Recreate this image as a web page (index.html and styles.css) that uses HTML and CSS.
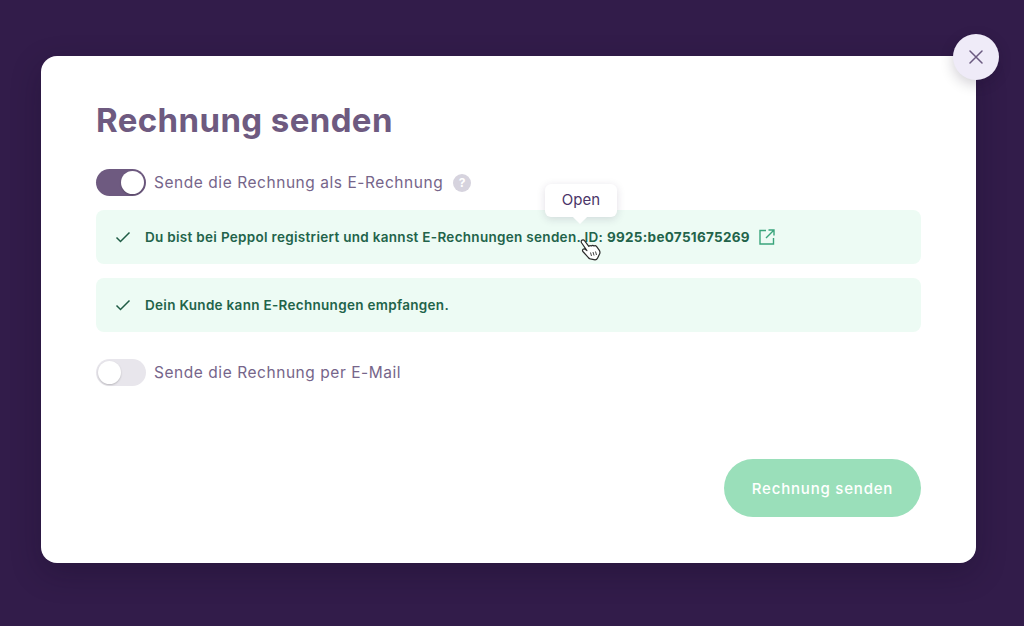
FILE: index.html
```html
<!DOCTYPE html>
<html lang="de">
<head>
    <meta charset="UTF-8">
    <meta name="viewport" content="width=device-width, initial-scale=1.0">
    <title>Rechnung senden</title>
    <link rel="stylesheet" href="styles.css">
</head>
<body>
    <div class="modal">
        <button class="close-btn" aria-label="Schliessen">
            <svg width="14" height="14" viewBox="0 0 14 14"><path d="M1 1l12 12M13 1L1 13" stroke="#6b5a80" stroke-width="1.5" fill="none" stroke-linecap="round"/></svg>
        </button>

        <h1 class="title">Rechnung senden</h1>

        <div class="toggle-row">
            <span class="toggle toggle-on"><span class="knob"></span></span>
            <span class="toggle-label">Sende die Rechnung als E-Rechnung</span>
            <span class="help">?</span>
        </div>

        <div class="notice notice-first">
            <svg class="check" width="16" height="12" viewBox="0 0 16 12"><path d="M1.5 6.5l4 4L14.5 1.5" stroke="#1f5c45" stroke-width="1.5" fill="none"/></svg>
            <span class="notice-text">Du bist bei Peppol registriert und kannst E-Rechnungen senden. ID: <b>9925:be0751675269</b></span>
            <svg class="ext" width="16" height="16" viewBox="0 0 16 16"><path d="M7 1.5H1v13.5h13.5V9M9.5 1H15v5.5M15 1L7 9" stroke="#3aa57c" stroke-width="1.4" fill="none"/></svg>
            <div class="tooltip">Open</div>
            <svg class="cursor" width="22" height="24" viewBox="0 0 22 24">
                <path d="M1.5 2.5c.9-1 2.3-.8 3 .2l4.3 5.600c.7-.8 1.800-.9 2.600-.3.700-.7 1.900-.7 2.600 0 .8-.5 1.900-.3 2.500.4l2.700 3.700c1 1.500.9 3.300 0 4.700l-1.700 3.500c-.5 1-1.400 1.500-2.400 1.500l-4.800-.9c-.9-.2-1.600-.7-2.100-1.500l-5.300-5.900c-.6-.7-.5-1.700.2-2.200.7-.5 1.700-.4 2.400.2l1.400 1.100L1.700 5c-.5-.9-.7-1.800-.2-2.500z" fill="#fff" stroke="#2b2b2b" stroke-width="1.2" stroke-linejoin="round"/>
                <path d="M10.5 14.5l1 3.5M13 14l1 3.5M15.5 13.5l1 3.5" stroke="#444" stroke-width="1"/>
            </svg>
        </div>

        <div class="notice">
            <svg class="check" width="16" height="12" viewBox="0 0 16 12"><path d="M1.5 6.5l4 4L14.5 1.5" stroke="#1f5c45" stroke-width="1.5" fill="none"/></svg>
            <span class="notice-text">Dein Kunde kann E-Rechnungen empfangen.</span>
        </div>

        <div class="toggle-row toggle-row-last">
            <span class="toggle"><span class="knob"></span></span>
            <span class="toggle-label">Sende die Rechnung per E-Mail</span>
        </div>

        <div class="actions">
            <button class="send-btn">Rechnung senden</button>
        </div>
    </div>
</body>
</html>
```

FILE: styles.css
```css
* {
    box-sizing: border-box;
}
html, body {
    height: 100%;
}
body {
    margin: 0;
    padding: 56px 48px 63px 41px;
    background-color: #321c4a;
    font-family: Inter, "Open Sans", sans-serif;
    overflow: hidden;
}
.modal {
    position: relative;
    height: 507px;
    background-color: #fff;
    border-radius: 16px;
    padding: 44px 55px 0 55px;
    box-shadow: 0 10px 30px rgba(20,10,35,0.3);
}
.close-btn {
    position: absolute;
    top: -22px;
    right: -23px;
    width: 46px;
    height: 46px;
    padding: 0;
    border: none;
    border-radius: 50%;
    background-color: #efebf8;
    display: flex;
    align-items: center;
    justify-content: center;
    box-shadow: 0 4px 14px rgba(20,10,35,0.2);
}
.title {
    margin: 0 0 29px 0;
    font-size: 33px;
    line-height: 40px;
    font-weight: 700;
    letter-spacing: 0.4px;
    color: #6e5a80;
}
.toggle-row {
    display: flex;
    align-items: center;
    height: 27px;
    margin-bottom: 14px;
}
.toggle-row-last {
    margin-top: 27px;
}
.toggle {
    width: 50px;
    height: 27px;
    border-radius: 14px;
    background-color: #e8e6ec;
    padding: 2px;
    display: flex;
    flex-shrink: 0;
}
.toggle-on {
    background-color: #6e5a80;
    justify-content: flex-end;
}
.knob {
    width: 23px;
    height: 23px;
    border-radius: 50%;
    background-color: #fff;
    box-shadow: 0 1px 2px rgba(0,0,0,0.2);
}
.toggle-label {
    margin-left: 8px;
    font-size: 15.5px;
    letter-spacing: 0.55px;
    color: #76658a;
}
.help {
    width: 18px;
    height: 18px;
    margin-left: 10px;
    border-radius: 50%;
    background-color: #d6d3de;
    color: #fff;
    font-size: 12px;
    font-weight: 700;
    text-align: center;
    line-height: 18px;
}
.notice {
    position: relative;
    display: flex;
    align-items: center;
    height: 54px;
    padding-left: 19px;
    background-color: #edfbf4;
    border-radius: 8px;
}
.notice-first {
    margin-bottom: 14px;
}
.check {
    flex-shrink: 0;
    margin-right: 14px;
}
.notice-text {
    font-size: 13.5px;
    font-weight: 600;
    letter-spacing: 0.3px;
    color: #22634a;
}
.notice-text b {
    font-weight: 700;
}
.ext {
    margin-left: 9px;
}
.tooltip {
    position: absolute;
    top: -26px;
    left: 449px;
    width: 72px;
    height: 33px;
    background-color: #fff;
    border-radius: 6px;
    box-shadow: 0 2px 8px rgba(50,28,74,0.15);
    color: #4a3568;
    font-size: 15px;
    line-height: 31px;
    text-align: center;
}
.tooltip::after {
    content: "";
    position: absolute;
    left: 30px;
    bottom: -5px;
    width: 10px;
    height: 10px;
    background-color: #fff;
    transform: rotate(45deg);
}
.cursor {
    position: absolute;
    top: 28px;
    left: 484px;
}
.actions {
    display: flex;
    justify-content: flex-end;
    margin-top: 73px;
}
.send-btn {
    width: 197px;
    height: 58px;
    border: none;
    border-radius: 29px;
    background-color: #9adfba;
    color: #fff;
    font-family: inherit;
    font-size: 15px;
    font-weight: 500;
    letter-spacing: 0.8px;
}
```
